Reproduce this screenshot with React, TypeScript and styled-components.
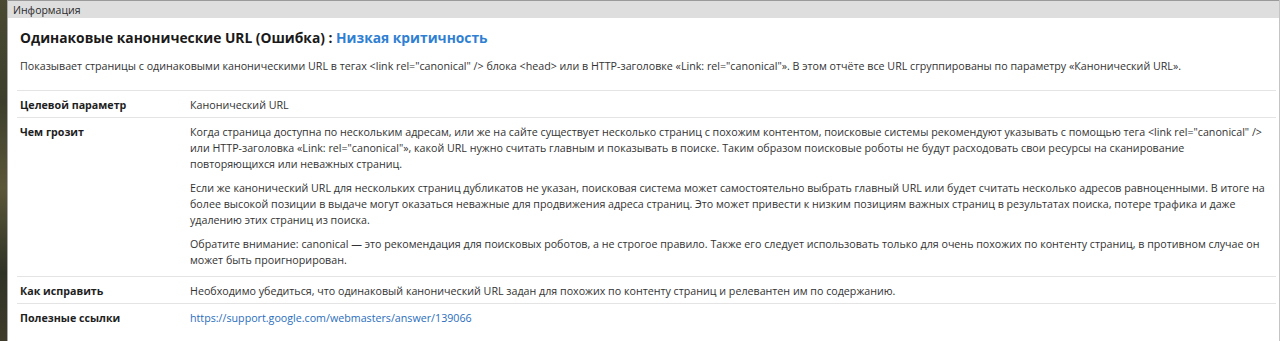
import styled, { createGlobalStyle } from "styled-components";

const Global = createGlobalStyle`
  html, body {
    margin: 0;
    padding: 0;
    background: #ffffff;
  }
  body {
    font-family: "Segoe UI", "Open Sans", "Noto Sans", sans-serif;
  }
`;

const Screen = styled.div`
  display: flex;
  width: 1280px;
  height: 341px;
  overflow: hidden;
  background: #ffffff;
`;

const Backdrop = styled.div`
  width: 7px;
  flex-shrink: 0;
  background: linear-gradient(180deg, #4a4a32 0%, #3d3f2c 30%, #5a5638 55%, #2f3326 80%, #3f3b2a 100%);
`;

const Window = styled.div`
  flex: 1;
  display: flex;
  flex-direction: column;
  border-left: 1px solid #a9a9a9;
  border-right: 1px solid #c4c4c4;
  min-width: 0;
`;

const TitleBar = styled.div`
  height: 17px;
  background: #dedede;
  border-top: 1px solid #9a9a9a;
  padding-left: 5px;
  display: flex;
  align-items: center;
  font-size: 10.5px;
  color: #2b2b2b;
`;

const Body = styled.div`
  padding: 10px 3px 0 9px;
`;

const Heading = styled.h1`
  margin: 0 0 0 3px;
  font-size: 13.8px;
  line-height: 20px;
  font-weight: 700;
  color: #1a1a1a;
`;

const Severity = styled.span`
  color: #2f7fd3;
`;

const Lead = styled.p`
  margin: 10px 0 0 3px;
  font-size: 10.7px;
  line-height: 16px;
  color: #333333;
`;

const Table = styled.div`
  margin-top: 16px;
  border-top: 1px solid #e4e4e4;
`;

const Row = styled.div<{ $last?: boolean }>`
  display: grid;
  grid-template-columns: 173px 1fr;
  padding: 6px 0 4px;
  border-bottom: ${(p) => (p.$last ? "none" : "1px solid #e4e4e4")};
  font-size: 10.7px;
  line-height: 16px;
`;

const Label = styled.div`
  padding-left: 3px;
  font-weight: 700;
  color: #1e1e1e;
`;

const Value = styled.div<{ $gap?: number }>`
  display: flex;
  flex-direction: column;
  gap: ${(p) => p.$gap ?? 0}px;
  padding-bottom: ${(p) => (p.$gap ? 4 : 0)}px;
  padding-right: 10px;
  color: #333333;
`;

const Para = styled.p`
  margin: 0;
`;

const Link = styled.a`
  color: #2a6ebd;
  text-decoration: none;
`;

export default function App() {
  return (
    <Screen>
      <Global />
      <Backdrop />
      <Window>
        <TitleBar>Информация</TitleBar>
        <Body>
          <Heading>
            Одинаковые канонические URL (Ошибка) : <Severity>Низкая критичность</Severity>
          </Heading>
          <Lead>
            Показывает страницы с одинаковыми каноническими URL в тегах &lt;link rel="canonical" /&gt; блока &lt;head&gt; или в HTTP-заголовке «Link: rel="canonical"». В этом отчёте все URL сгруппированы по параметру «Канонический URL».
          </Lead>
          <Table>
            <Row>
              <Label>Целевой параметр</Label>
              <Value>Канонический URL</Value>
            </Row>
            <Row>
              <Label>Чем грозит</Label>
              <Value $gap={8}>
                <Para>
                  Когда страница доступна по нескольким адресам, или же на сайте существует несколько страниц с похожим контентом, поисковые системы рекомендуют указывать с помощью тега &lt;link rel="canonical" /&gt; или HTTP-заголовка «Link: rel="canonical"», какой URL нужно считать главным и показывать в поиске. Таким образом поисковые роботы не будут расходовать свои ресурсы на сканирование повторяющихся или неважных страниц.
                </Para>
                <Para>
                  Если же канонический URL для нескольких страниц дубликатов не указан, поисковая система может самостоятельно выбрать главный URL или будет считать несколько адресов равноценными. В итоге на более высокой позиции в выдаче могут оказаться неважные для продвижения адреса страниц. Это может привести к низким позициям важных страниц в результатах поиска, потере трафика и даже удалению этих страниц из поиска.
                </Para>
                <Para>
                  Обратите внимание: canonical — это рекомендация для поисковых роботов, а не строгое правило. Также его следует использовать только для очень похожих по контенту страниц, в противном случае он может быть проигнорирован.
                </Para>
              </Value>
            </Row>
            <Row>
              <Label>Как исправить</Label>
              <Value>
                Необходимо убедиться, что одинаковый канонический URL задан для похожих по контенту страниц и релевантен им по содержанию.
              </Value>
            </Row>
            <Row $last>
              <Label>Полезные ссылки</Label>
              <Value>
                <Link href="#">https://support.google.com/webmasters/answer/139066</Link>
              </Value>
            </Row>
          </Table>
        </Body>
      </Window>
    </Screen>
  );
}
